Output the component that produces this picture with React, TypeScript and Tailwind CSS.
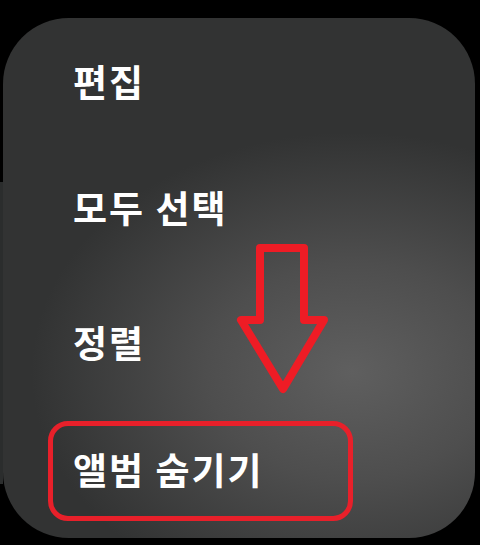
const font = { fontFamily: '"Noto Sans CJK KR", "Noto Sans", sans-serif' };

const DownArrow = () => (
  <svg
    className="absolute left-[227px] top-[220px]"
    width="105"
    height="165"
    viewBox="0 0 105 165"
    fill="none"
  >
    <polygon
      points="30,10 74,10 74,82 94,82 53,151 11,82 30,82"
      stroke="#ee1c25"
      strokeWidth="8"
      strokeLinejoin="round"
    />
  </svg>
);

export default function App() {
  return (
    <div className="flex w-[480px] h-[545px] bg-black overflow-hidden" style={font}>
      {/* sliver of the screen behind */}
      <div className="w-[3px] h-[302px] mt-[182px] bg-[#2b2d2d]" />

      <div className="relative w-[472px] h-[520px] mt-[18px] rounded-[66px] bg-[radial-gradient(ellipse_68%_46%_at_74%_68%,#5f5f5f_0%,#4e4e4e_45%,#323333_100%)] pt-[45px] text-white font-bold text-[37px] leading-[37px] tracking-[2px]">
        <div className="pl-[70px]">편집</div>
        <div className="pl-[70px] mt-[89px]">모두 선택</div>
        <div className="pl-[70px] mt-[98px]">정렬</div>

        <div className="ml-[45px] mt-[60px] w-[305px] h-[100px] border-[5px] border-[#e8202a] rounded-[20px] pl-[20px] pt-[25px]">
          앨범 숨기기
        </div>

        <DownArrow />
      </div>
    </div>
  );
}
